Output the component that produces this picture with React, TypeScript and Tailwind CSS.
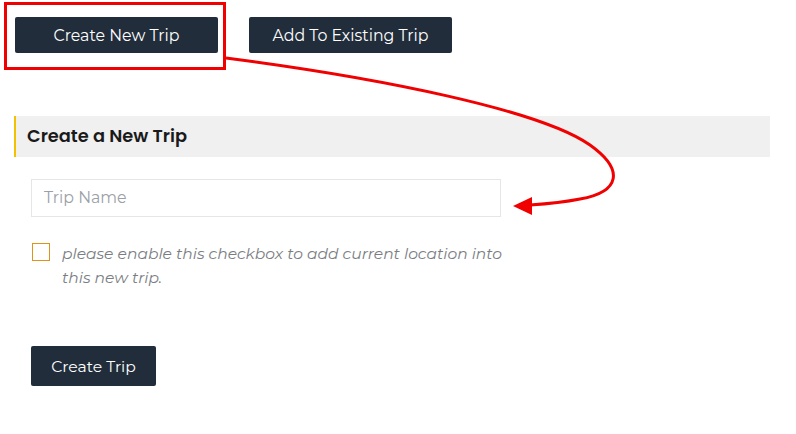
export default function App() {
  return (
    <div className="relative w-[796px] h-[434px] overflow-hidden bg-white" style={{ fontFamily: 'Montserrat, "DejaVu Sans", sans-serif' }}>
      <div className="flex gap-[31px] pl-[15px] pt-[17px]">
        <button className="flex h-[36px] w-[203px] items-center justify-center rounded-[2px] bg-[#212d3b] pt-px text-[15.8px] text-white">
          Create New Trip
        </button>
        <button className="flex h-[36px] w-[203px] items-center justify-center rounded-[2px] bg-[#212d3b] pt-px text-[15.8px] text-white">
          Add To Existing Trip
        </button>
      </div>

      <div className="ml-[14px] mt-[63px] flex h-[41px] w-[756px] items-center border-l-2 border-[#f2c200] bg-[#f0f0f0] pl-[11px]">
        <h2 className="text-[17.8px] font-semibold text-[#1a1a1a]" style={{ fontFamily: 'Poppins, Inter, sans-serif' }}>
          Create a New Trip
        </h2>
      </div>

      <div className="ml-[31px] mt-[22px] flex h-[38px] w-[470px] items-center border border-[#e6e6e6] px-[12px]">
        <span className="text-[15.8px] text-[#9aa0a8]">Trip Name</span>
      </div>

      <div className="ml-[32px] mt-[25px] flex gap-[12px]">
        <div className="mt-px h-[18px] w-[18px] shrink-0 border border-[#e0921a]" />
        <p className="text-[15.5px] italic leading-[24px] text-[#7a7d82]">
          please enable this checkbox to add current location into
          <br />
          this new trip.
        </p>
      </div>

      <button className="ml-[31px] mt-[56px] flex h-[40px] w-[125px] items-center justify-center rounded-[2px] bg-[#212d3b] pt-px text-[15.6px] text-white">
        Create Trip
      </button>

      <div className="absolute left-[4px] top-[2px] h-[68px] w-[222px] border-[3px] border-[#f00000]" />

      <svg className="absolute left-0 top-0" width="796" height="434" viewBox="0 0 796 434">
        <path
          d="M226 58 C 380 78 540 110 590 145 C 625 170 620 192 580 199 C 560 203 545 204 530 205"
          fill="none"
          stroke="#f00000"
          strokeWidth="3"
        />
        <polygon points="513,206 532,197 532,215" fill="#f00000" />
      </svg>
    </div>
  )
}
